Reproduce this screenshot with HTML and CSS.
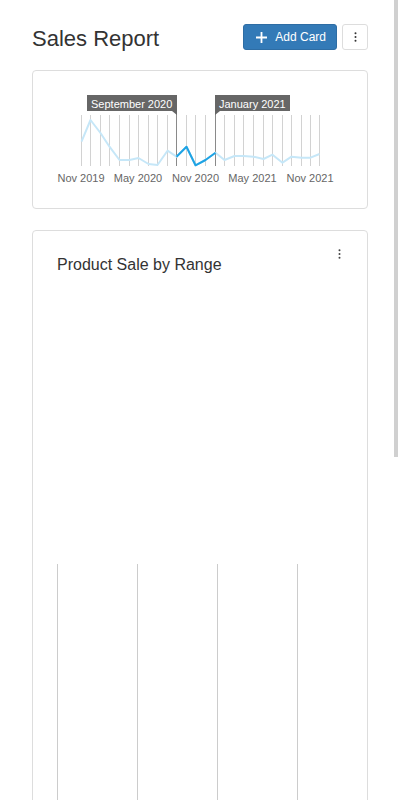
FILE: index.html
```html
<!DOCTYPE html>
<html>
<head>
<meta charset="utf-8">
<link rel="stylesheet" href="styles.css">
</head>
<body>
<div class="page">
  <div class="header">
    <h1 class="title">Sales Report</h1>
    <div class="actions">
      <button class="btn-primary">
        <svg class="plus" width="11" height="11" viewBox="0 0 11 11"><path d="M5.5 0V11M0 5.5H11" stroke="#fff" stroke-width="1.8"/></svg>
        <span>Add Card</span>
      </button>
      <button class="btn-kebab">
        <svg width="3" height="10" viewBox="0 0 3 10"><circle cx="1.5" cy="1.3" r="1"/><circle cx="1.5" cy="5" r="1"/><circle cx="1.5" cy="8.7" r="1"/></svg>
      </button>
    </div>
  </div>

  <div class="card card-range">
    <svg class="range-chart" width="334" height="137" viewBox="33 71 334 137">
      <g class="grid" stroke="#d2d2d2" stroke-width="1">
        <line x1="81.5" y1="115" x2="81.5" y2="166"/>
        <line x1="90.5" y1="115" x2="90.5" y2="166"/>
        <line x1="100.5" y1="115" x2="100.5" y2="166"/>
        <line x1="109.5" y1="115" x2="109.5" y2="166"/>
        <line x1="119.5" y1="115" x2="119.5" y2="166"/>
        <line x1="129.5" y1="115" x2="129.5" y2="166"/>
        <line x1="138.5" y1="115" x2="138.5" y2="166"/>
        <line x1="148.5" y1="115" x2="148.5" y2="166"/>
        <line x1="157.5" y1="115" x2="157.5" y2="166"/>
        <line x1="167.5" y1="115" x2="167.5" y2="166"/>
        <line x1="186.5" y1="115" x2="186.5" y2="166"/>
        <line x1="195.5" y1="115" x2="195.5" y2="166"/>
        <line x1="205.5" y1="115" x2="205.5" y2="166"/>
        <line x1="224.5" y1="115" x2="224.5" y2="166"/>
        <line x1="234.5" y1="115" x2="234.5" y2="166"/>
        <line x1="243.5" y1="115" x2="243.5" y2="166"/>
        <line x1="253.5" y1="115" x2="253.5" y2="166"/>
        <line x1="263.5" y1="115" x2="263.5" y2="166"/>
        <line x1="272.5" y1="115" x2="272.5" y2="166"/>
        <line x1="282.5" y1="115" x2="282.5" y2="166"/>
        <line x1="291.5" y1="115" x2="291.5" y2="166"/>
        <line x1="301.5" y1="115" x2="301.5" y2="166"/>
        <line x1="310.5" y1="115" x2="310.5" y2="166"/>
        <line x1="319.5" y1="115" x2="319.5" y2="166"/>
      </g>
      <g stroke="#8a8a8a" stroke-width="1">
        <line x1="176.5" y1="111" x2="176.5" y2="166"/>
        <line x1="215.5" y1="111" x2="215.5" y2="166"/>
      </g>
      <polyline fill="none" stroke="#c6e7f8" stroke-width="2" stroke-linejoin="round"
        points="81.5,141.7 90.5,120 100.5,133 109.5,146.7 119.5,160 129.5,160 138.5,158 148.5,164 157.5,165 167.5,150.7 176.5,156.7 186.5,146.7 195.5,165.3 205.5,160 215.5,152.7 224.5,160 234.5,156 243.5,156 253.5,156.7 263.5,159 272.5,154.7 282.5,162.7 291.5,156.7 301.5,157.7 310.5,157.7 319.5,154"/>
      <polyline fill="none" stroke="#1ea3e4" stroke-width="2" stroke-linejoin="round"
        points="176.5,156.7 186.5,146.7 195.5,165.3 205.5,160 215.5,152.7"/>
      <g class="tip">
        <rect x="87" y="95" width="90" height="16" fill="#666"/>
        <polygon points="172,111 177,111 177,115" fill="#666"/>
        <text x="91" y="107.5" class="tip-text">September 2020</text>
        <rect x="215" y="95" width="75" height="16" fill="#666"/>
        <polygon points="215,111 220,111 215,115" fill="#666"/>
        <text x="219" y="107.5" class="tip-text">January 2021</text>
      </g>
      <g class="axis">
        <text x="81" y="182">Nov 2019</text>
        <text x="138" y="182">May 2020</text>
        <text x="195.5" y="182">Nov 2020</text>
        <text x="252.5" y="182">May 2021</text>
        <text x="310" y="182">Nov 2021</text>
      </g>
    </svg>
  </div>

  <div class="card card-product">
    <div class="card-head">
      <h2 class="card-title">Product Sale by Range</h2>
      <svg class="kebab" width="3" height="10" viewBox="0 0 3 10"><circle cx="1.5" cy="1.3" r="1"/><circle cx="1.5" cy="5" r="1"/><circle cx="1.5" cy="8.7" r="1"/></svg>
    </div>
    <div class="columns">
      <div class="col"></div>
      <div class="col"></div>
      <div class="col"></div>
      <div class="col"></div>
    </div>
  </div>
</div>
<div class="scroll-thumb"></div>
</body>
</html>
```

FILE: styles.css
```css
html, body {
  margin: 0;
  padding: 0;
  overflow: hidden;
  height: 800px;
  background: #fff;
}
body {
  font-family: "Liberation Sans", Arial, sans-serif;
  color: #333;
}
.page {
  padding: 24px 32px 0 32px;
}
.header {
  display: flex;
  justify-content: space-between;
  align-items: flex-start;
}
.title {
  margin: 0;
  font-size: 22px;
  font-weight: normal;
  line-height: 29px;
  color: #333;
}
.actions {
  display: flex;
  gap: 5px;
}
.btn-primary {
  display: flex;
  align-items: center;
  gap: 8px;
  height: 26px;
  padding: 0 10px 0 12px;
  border: 1px solid #2e6da4;
  border-radius: 3px;
  background: #337ab7;
  color: #fff;
  font-family: "Liberation Sans", Arial, sans-serif;
  font-size: 12px;
  white-space: nowrap;
  box-sizing: border-box;
}
.plus {
  display: block;
  flex: none;
}
.btn-kebab {
  display: flex;
  align-items: center;
  justify-content: center;
  width: 26px;
  height: 26px;
  padding: 0;
  border: 1px solid #ddd;
  border-radius: 3px;
  background: #fff;
  box-sizing: border-box;
  fill: #333;
}
.card {
  border: 1px solid #ddd;
  border-radius: 4px;
  background: #fff;
  box-sizing: border-box;
}
.card-range {
  margin-top: 17px;
  height: 139px;
}
.range-chart {
  display: block;
}
.tip-text {
  font-family: "Liberation Sans", Arial, sans-serif;
  font-size: 11px;
  fill: #fff;
}
.axis text {
  font-family: "Liberation Sans", Arial, sans-serif;
  font-size: 11px;
  fill: #666;
  text-anchor: middle;
}
.card-product {
  margin-top: 21px;
  height: 700px;
}
.card-head {
  display: flex;
  justify-content: space-between;
  align-items: flex-start;
  padding: 18px 26px 0 24px;
}
.card-title {
  margin: 6px 0 0 0;
  font-size: 16px;
  font-weight: normal;
  line-height: 20px;
  color: #333;
}
.kebab {
  display: block;
  fill: #444;
}
.columns {
  display: flex;
  margin: 289px 0 0 24px;
}
.col {
  flex: none;
  width: 79px;
  height: 400px;
  border-left: 1px solid #ccc;
}
.scroll-thumb {
  position: fixed;
  top: 0;
  right: 2px;
  width: 4px;
  height: 457px;
  background: #d0d0d0;
}
```
